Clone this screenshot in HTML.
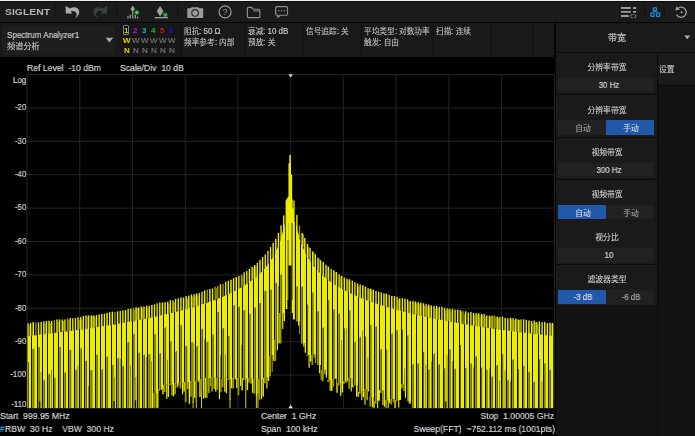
<!DOCTYPE html>
<html lang="zh"><head><meta charset="utf-8"><title>SIGLENT Spectrum Analyzer</title>
<style>
*{margin:0;padding:0;box-sizing:border-box}
html,body{width:695px;height:436px;overflow:hidden;background:#000}
body{position:relative;font-family:"Liberation Sans","Noto Sans CJK SC",sans-serif;color:#cfcfcf;font-size:8px;line-height:12px}
.t{position:absolute;white-space:pre;line-height:12px;height:12px;will-change:transform;-webkit-text-stroke:0.22px}
.c{-webkit-text-stroke:0.1px}
.box{position:absolute}
svg{position:absolute;left:0;top:0;overflow:visible}
</style></head>
<body>
<div class="box" style="left:0px;top:0px;width:695px;height:1px;background:#f0f0f0;"></div>
<div class="box" style="left:0px;top:1px;width:695px;height:1.4px;background:#0a0a0a;"></div>
<div class="box" style="left:0px;top:2.2px;width:695px;height:20px;background:#1b1b1b;"></div>
<div class="box" style="left:0px;top:21.9px;width:695px;height:1.2px;background:#050505;"></div>
<div class="box" style="left:0px;top:23px;width:556px;height:34px;background:#191919;"></div>
<div class="box" style="left:2px;top:25.6px;width:113.3px;height:29px;background:#1e1e1e;border-radius:4px;"></div>
<div class="t" style="top:28.8px;font-size:8.3px;left:6.5px;transform:scaleX(0.973);transform-origin:left center;color:#c6c6c6;">Spectrum Analyzer1</div>
<div class="t" style="top:40.8px;font-size:8.2px;left:6.5px;color:#c6c6c6;"><span class="c">频谱分析</span></div>
<svg width="695" height="436"><polygon points="105.6,37.8 113.2,37.8 109.4,42.4" fill="#a8a8a8"/></svg>
<div class="box" style="left:120.5px;top:23px;width:60px;height:34px;background:#171717;"></div>
<div class="t" style="top:24.9px;font-size:8px;left:124px;color:#e4d400;font-weight:bold;-webkit-text-stroke:0;">1</div>
<div class="t" style="top:35px;font-size:8px;left:123.3px;color:#e4d400;font-weight:bold;-webkit-text-stroke:0;">W</div>
<div class="t" style="top:44.9px;font-size:8px;left:123.6px;color:#e4d400;font-weight:bold;-webkit-text-stroke:0;">N</div>
<div class="t" style="top:24.9px;font-size:8px;left:133px;color:#cc18cc;font-weight:bold;-webkit-text-stroke:0;">2</div>
<div class="t" style="top:35px;font-size:8px;left:132.4px;color:#737373;">W</div>
<div class="t" style="top:44.9px;font-size:8px;left:132.7px;color:#737373;">N</div>
<div class="t" style="top:24.9px;font-size:8px;left:142px;color:#10b8b8;font-weight:bold;-webkit-text-stroke:0;">3</div>
<div class="t" style="top:35px;font-size:8px;left:141.4px;color:#737373;">W</div>
<div class="t" style="top:44.9px;font-size:8px;left:141.7px;color:#737373;">N</div>
<div class="t" style="top:24.9px;font-size:8px;left:150.9px;color:#10c810;font-weight:bold;-webkit-text-stroke:0;">4</div>
<div class="t" style="top:35px;font-size:8px;left:150.3px;color:#737373;">W</div>
<div class="t" style="top:44.9px;font-size:8px;left:150.6px;color:#737373;">N</div>
<div class="t" style="top:24.9px;font-size:8px;left:159.9px;color:#d81414;font-weight:bold;-webkit-text-stroke:0;">5</div>
<div class="t" style="top:35px;font-size:8px;left:159.3px;color:#737373;">W</div>
<div class="t" style="top:44.9px;font-size:8px;left:159.6px;color:#737373;">N</div>
<div class="t" style="top:24.9px;font-size:8px;left:169px;color:#1414d8;font-weight:bold;-webkit-text-stroke:0;">6</div>
<div class="t" style="top:35px;font-size:8px;left:168.4px;color:#737373;">W</div>
<div class="t" style="top:44.9px;font-size:8px;left:168.7px;color:#737373;">N</div>
<div class="box" style="left:122.8px;top:24.8px;width:6.4px;height:10.6px;background:#000;border:1px solid #7d838b;border-radius:1px;"></div>
<div class="t" style="top:24.9px;font-size:8px;left:124px;color:#e4d400;font-weight:bold;-webkit-text-stroke:0;">1</div>
<div class="box" style="left:180.5px;top:24px;width:1px;height:33px;background:#0f0f0f;"></div>
<div class="box" style="left:244px;top:24px;width:1px;height:33px;background:#0f0f0f;"></div>
<div class="box" style="left:302.1px;top:24px;width:1px;height:33px;background:#0f0f0f;"></div>
<div class="box" style="left:360.5px;top:24px;width:1px;height:33px;background:#0f0f0f;"></div>
<div class="box" style="left:432.5px;top:24px;width:1px;height:33px;background:#0f0f0f;"></div>
<div class="box" style="left:490.8px;top:24px;width:1px;height:33px;background:#0f0f0f;"></div>
<div class="box" style="left:532.1px;top:24px;width:1px;height:33px;background:#0f0f0f;"></div>
<div class="t" style="left:184.4px;top:25.3px;color:#c2c2c2"><span class="c" style="font-size:7.65px">阻抗</span><span style="display:inline-block;font-size:8.6px;transform:scaleX(0.93);transform-origin:left center;margin-right:-1.62px">: 50 Ω</span></div>
<div class="t" style="left:184.4px;top:36.4px;color:#c2c2c2"><span class="c" style="font-size:7.65px">频率参考</span><span style="display:inline-block;font-size:8.6px;transform:scaleX(0.93);transform-origin:left center;margin-right:-0.33px">: </span><span class="c" style="font-size:7.65px">内部</span></div>
<div class="t" style="left:248px;top:25.3px;color:#c2c2c2"><span class="c" style="font-size:7.65px">衰减</span><span style="display:inline-block;font-size:8.6px;transform:scaleX(0.93);transform-origin:left center;margin-right:-1.91px">: 10 dB</span></div>
<div class="t" style="left:248px;top:36.4px;color:#c2c2c2"><span class="c" style="font-size:7.65px">预放</span><span style="display:inline-block;font-size:8.6px;transform:scaleX(0.93);transform-origin:left center;margin-right:-0.33px">: </span><span class="c" style="font-size:7.65px">关</span></div>
<div class="t" style="left:306.1px;top:25.3px;color:#c2c2c2"><span class="c" style="font-size:7.65px">信号追踪</span><span style="display:inline-block;font-size:8.6px;transform:scaleX(0.93);transform-origin:left center;margin-right:-0.33px">: </span><span class="c" style="font-size:7.65px">关</span></div>
<div class="t" style="left:364.1px;top:25.3px;color:#c2c2c2"><span class="c" style="font-size:7.65px">平均类型</span><span style="display:inline-block;font-size:8.6px;transform:scaleX(0.93);transform-origin:left center;margin-right:-0.33px">: </span><span class="c" style="font-size:7.65px">对数功率</span></div>
<div class="t" style="left:364.1px;top:36.4px;color:#c2c2c2"><span class="c" style="font-size:7.65px">触发</span><span style="display:inline-block;font-size:8.6px;transform:scaleX(0.93);transform-origin:left center;margin-right:-0.33px">: </span><span class="c" style="font-size:7.65px">自由</span></div>
<div class="t" style="left:436.2px;top:25.3px;color:#c2c2c2"><span class="c" style="font-size:7.65px">扫描</span><span style="display:inline-block;font-size:8.6px;transform:scaleX(0.93);transform-origin:left center;margin-right:-0.33px">: </span><span class="c" style="font-size:7.65px">连续</span></div>
<div class="box" style="left:554.1px;top:23px;width:2px;height:413px;background:#050505;"></div>
<div class="box" style="left:556px;top:23px;width:139px;height:413px;background:#131313;"></div>
<div class="box" style="left:556px;top:23.3px;width:139px;height:28.7px;background:#1a1a1a;"></div>
<div class="box" style="left:556px;top:52px;width:139px;height:1px;background:#0b0b0b;"></div>
<div class="t" style="top:31.8px;font-size:9px;left:587px;width:60px;text-align:center;color:#d8d8d8;"><span class="c">带宽</span></div>
<svg width="695" height="436"><polygon points="684.3,35.6 690.2,35.6 687.25,39.2" fill="#b0b0b0"/></svg>
<div class="box" style="left:657px;top:53px;width:1px;height:383px;background:#0b0b0b;"></div>
<div class="box" style="left:658px;top:53px;width:37px;height:31.8px;background:#1a1a1a;"></div>
<div class="box" style="left:658px;top:84.8px;width:37px;height:1px;background:#0b0b0b;"></div>
<div class="t" style="top:63.8px;font-size:7.8px;left:659.3px;color:#c4c4c4;"><span class="c">设置</span></div>
<div class="box" style="left:556px;top:52.8px;width:101px;height:41.5px;background:#1a1a1a;"></div>
<div class="box" style="left:556px;top:94.3px;width:101px;height:0.9px;background:#0b0b0b;"></div>
<div class="t" style="top:62.1px;font-size:7.8px;left:556.5px;width:100px;text-align:center;color:#d0d0d0;"><span class="c">分辨率带宽</span></div>
<div class="box" style="left:558.4px;top:78px;width:96px;height:14.1px;background:#212121;"></div>
<div class="t" style="top:79.3px;font-size:8.5px;left:560.7px;width:96px;text-align:center;transform:scaleX(0.93);transform-origin:center center;color:#d0d0d0;">30 Hz</div>
<div class="box" style="left:556px;top:95.2px;width:101px;height:41.5px;background:#1a1a1a;"></div>
<div class="box" style="left:556px;top:136.7px;width:101px;height:0.9px;background:#0b0b0b;"></div>
<div class="t" style="top:104.5px;font-size:7.8px;left:556.5px;width:100px;text-align:center;color:#d0d0d0;"><span class="c">分辨率带宽</span></div>
<div class="box" style="left:558.4px;top:120.4px;width:47.8px;height:14.2px;background:#212121;"></div>
<div class="box" style="left:606.2px;top:120.4px;width:48.2px;height:14.2px;background:#2258a8;"></div>
<div class="t" style="top:121.7px;font-size:8.5px;left:558.6px;width:48px;text-align:center;color:#a4a4a4;"><span class="c" style="font-size:7.8px">自动</span></div>
<div class="t" style="top:121.7px;font-size:8.5px;left:606.6px;width:48px;text-align:center;color:#dedede;"><span class="c" style="font-size:7.8px">手动</span></div>
<div class="box" style="left:556px;top:137.6px;width:101px;height:41.5px;background:#1a1a1a;"></div>
<div class="box" style="left:556px;top:179.1px;width:101px;height:0.9px;background:#0b0b0b;"></div>
<div class="t" style="top:146.9px;font-size:7.8px;left:556.5px;width:100px;text-align:center;color:#d0d0d0;"><span class="c">视频带宽</span></div>
<div class="box" style="left:558.4px;top:162.8px;width:96px;height:14.1px;background:#212121;"></div>
<div class="t" style="top:164.1px;font-size:8.5px;left:560.7px;width:96px;text-align:center;transform:scaleX(0.93);transform-origin:center center;color:#d0d0d0;">300 Hz</div>
<div class="box" style="left:556px;top:180px;width:101px;height:41.5px;background:#1a1a1a;"></div>
<div class="box" style="left:556px;top:221.5px;width:101px;height:0.9px;background:#0b0b0b;"></div>
<div class="t" style="top:189.3px;font-size:7.8px;left:556.5px;width:100px;text-align:center;color:#d0d0d0;"><span class="c">视频带宽</span></div>
<div class="box" style="left:558.4px;top:205.2px;width:47.8px;height:14.2px;background:#2258a8;"></div>
<div class="box" style="left:606.2px;top:205.2px;width:48.2px;height:14.2px;background:#212121;"></div>
<div class="t" style="top:206.5px;font-size:8.5px;left:558.6px;width:48px;text-align:center;color:#dedede;"><span class="c" style="font-size:7.8px">自动</span></div>
<div class="t" style="top:206.5px;font-size:8.5px;left:606.6px;width:48px;text-align:center;color:#a4a4a4;"><span class="c" style="font-size:7.8px">手动</span></div>
<div class="box" style="left:556px;top:222.4px;width:101px;height:41.5px;background:#1a1a1a;"></div>
<div class="box" style="left:556px;top:263.9px;width:101px;height:0.9px;background:#0b0b0b;"></div>
<div class="t" style="top:231.7px;font-size:7.8px;left:556.5px;width:100px;text-align:center;color:#d0d0d0;"><span class="c">视分比</span></div>
<div class="box" style="left:558.4px;top:247.6px;width:96px;height:14.1px;background:#212121;"></div>
<div class="t" style="top:248.9px;font-size:8.5px;left:560.7px;width:96px;text-align:center;transform:scaleX(0.93);transform-origin:center center;color:#d0d0d0;">10</div>
<div class="box" style="left:556px;top:264.8px;width:101px;height:41.5px;background:#1a1a1a;"></div>
<div class="box" style="left:556px;top:306.3px;width:101px;height:0.9px;background:#0b0b0b;"></div>
<div class="t" style="top:274.1px;font-size:7.8px;left:556.5px;width:100px;text-align:center;color:#d0d0d0;"><span class="c">滤波器类型</span></div>
<div class="box" style="left:558.4px;top:290px;width:47.8px;height:14.2px;background:#2258a8;"></div>
<div class="box" style="left:606.2px;top:290px;width:48.2px;height:14.2px;background:#212121;"></div>
<div class="t" style="top:291.3px;font-size:8.5px;left:558.6px;width:48px;text-align:center;transform:scaleX(0.93);transform-origin:center center;color:#dedede;">-3 dB</div>
<div class="t" style="top:291.3px;font-size:8.5px;left:606.6px;width:48px;text-align:center;transform:scaleX(0.93);transform-origin:center center;color:#a4a4a4;">-6 dB</div>
<div class="t" style="top:61.7px;font-size:9.3px;left:26.8px;transform:scaleX(0.93);transform-origin:left center;color:#d4d4d8;">Ref Level  -10 dBm</div>
<div class="t" style="top:61.7px;font-size:9.3px;left:120.1px;transform:scaleX(0.93);transform-origin:left center;color:#d4d4d8;">Scale/Div  10 dB</div>
<div class="t" style="top:74.4px;font-size:8.6px;right:668.6px;text-align:right;transform:scaleX(0.93);transform-origin:right center;color:#d4d4d8;">Log</div>
<div class="t" style="top:101.23px;font-size:8.6px;right:668.6px;text-align:right;transform:scaleX(0.93);transform-origin:right center;color:#d4d4d8;">-20</div>
<div class="t" style="top:134.61px;font-size:8.6px;right:668.6px;text-align:right;transform:scaleX(0.93);transform-origin:right center;color:#d4d4d8;">-30</div>
<div class="t" style="top:167.99px;font-size:8.6px;right:668.6px;text-align:right;transform:scaleX(0.93);transform-origin:right center;color:#d4d4d8;">-40</div>
<div class="t" style="top:201.37px;font-size:8.6px;right:668.6px;text-align:right;transform:scaleX(0.93);transform-origin:right center;color:#d4d4d8;">-50</div>
<div class="t" style="top:234.75px;font-size:8.6px;right:668.6px;text-align:right;transform:scaleX(0.93);transform-origin:right center;color:#d4d4d8;">-60</div>
<div class="t" style="top:268.13px;font-size:8.6px;right:668.6px;text-align:right;transform:scaleX(0.93);transform-origin:right center;color:#d4d4d8;">-70</div>
<div class="t" style="top:301.51px;font-size:8.6px;right:668.6px;text-align:right;transform:scaleX(0.93);transform-origin:right center;color:#d4d4d8;">-80</div>
<div class="t" style="top:334.89px;font-size:8.6px;right:668.6px;text-align:right;transform:scaleX(0.93);transform-origin:right center;color:#d4d4d8;">-90</div>
<div class="t" style="top:368.27px;font-size:8.6px;right:668.6px;text-align:right;transform:scaleX(0.93);transform-origin:right center;color:#d4d4d8;">-100</div>
<div class="t" style="top:397.6px;font-size:8.6px;right:668.6px;text-align:right;transform:scaleX(0.93);transform-origin:right center;color:#d4d4d8;">-110</div>
<div class="t" style="top:409.5px;font-size:9.3px;left:0.3px;transform:scaleX(0.93);transform-origin:left center;color:#d4d4d8;">Start  999.95 MHz</div>
<div class="t" style="top:422.9px;font-size:9.3px;left:5.3px;transform:scaleX(0.93);transform-origin:left center;color:#d4d4d8;">RBW  30 Hz    VBW  300 Hz</div>
<div class="t" style="top:422.9px;font-size:9.3px;left:0px;transform:scaleX(0.85);transform-origin:left center;color:#2f9ff2;">#</div>
<div class="t" style="top:409.5px;font-size:9.3px;left:260.5px;transform:scaleX(0.93);transform-origin:left center;color:#d4d4d8;">Center  1 GHz</div>
<div class="t" style="top:422.9px;font-size:9.3px;left:260.5px;transform:scaleX(0.93);transform-origin:left center;color:#d4d4d8;">Span  100 kHz</div>
<div class="t" style="top:409.5px;font-size:9.3px;right:140.9px;text-align:right;transform:scaleX(0.93);transform-origin:right center;color:#d4d4d8;">Stop  1.00005 GHz</div>
<div class="t" style="top:422.9px;font-size:9.3px;right:139.8px;text-align:right;transform:scaleX(0.93);transform-origin:right center;color:#d4d4d8;">Sweep(FFT)  ~752.112 ms (1001pts)</div>
<svg width="695" height="436">
<g stroke="#242424" stroke-width="1" fill="none">
<line x1="27.00" y1="74.60" x2="27.00" y2="408.40"/>
<line x1="27.00" y1="74.60" x2="554.30" y2="74.60"/>
<line x1="79.73" y1="74.60" x2="79.73" y2="408.40"/>
<line x1="27.00" y1="107.98" x2="554.30" y2="107.98"/>
<line x1="132.46" y1="74.60" x2="132.46" y2="408.40"/>
<line x1="27.00" y1="141.36" x2="554.30" y2="141.36"/>
<line x1="185.19" y1="74.60" x2="185.19" y2="408.40"/>
<line x1="27.00" y1="174.74" x2="554.30" y2="174.74"/>
<line x1="237.92" y1="74.60" x2="237.92" y2="408.40"/>
<line x1="27.00" y1="208.12" x2="554.30" y2="208.12"/>
<line x1="290.65" y1="74.60" x2="290.65" y2="408.40"/>
<line x1="27.00" y1="241.50" x2="554.30" y2="241.50"/>
<line x1="343.38" y1="74.60" x2="343.38" y2="408.40"/>
<line x1="27.00" y1="274.88" x2="554.30" y2="274.88"/>
<line x1="396.11" y1="74.60" x2="396.11" y2="408.40"/>
<line x1="27.00" y1="308.26" x2="554.30" y2="308.26"/>
<line x1="448.84" y1="74.60" x2="448.84" y2="408.40"/>
<line x1="27.00" y1="341.64" x2="554.30" y2="341.64"/>
<line x1="501.57" y1="74.60" x2="501.57" y2="408.40"/>
<line x1="27.00" y1="375.02" x2="554.30" y2="375.02"/>
<line x1="554.30" y1="74.60" x2="554.30" y2="408.40"/>
<line x1="27.00" y1="408.40" x2="554.30" y2="408.40"/>
</g>
<clipPath id="tc"><rect x="27.25" y="74.60" width="526.25" height="333.30"/></clipPath>
<g clip-path="url(#tc)">
<g fill="#ecec00"><polygon points="27.25,336.08 31.92,335.56 31.92,407.90 27.25,407.90"/><polygon points="31.92,335.56 37.20,334.96 37.20,407.90 31.92,407.90"/><polygon points="37.20,334.96 42.47,334.35 42.47,407.90 37.20,407.90"/><polygon points="42.47,334.35 47.74,333.73 47.74,407.90 42.47,407.90"/><polygon points="47.74,333.73 53.02,333.09 53.02,407.90 47.74,407.90"/><polygon points="53.02,333.09 58.29,332.44 58.29,407.90 53.02,407.90"/><polygon points="58.29,332.44 63.56,331.78 63.56,407.90 58.29,407.90"/><polygon points="63.56,331.78 68.83,331.09 68.83,407.90 63.56,407.90"/><polygon points="68.83,331.09 74.11,330.39 74.11,407.90 68.83,407.90"/><polygon points="74.11,330.39 79.38,329.68 79.38,407.90 74.11,407.90"/><polygon points="79.38,329.68 84.65,328.94 84.65,407.90 79.38,407.90"/><polygon points="84.65,328.94 89.93,328.19 89.93,407.90 84.65,407.90"/><polygon points="89.93,328.19 95.20,327.42 95.20,407.90 89.93,407.90"/><polygon points="95.20,327.42 100.47,326.62 100.47,407.90 95.20,407.90"/><polygon points="100.47,326.62 105.75,325.81 105.75,407.90 100.47,407.90"/><polygon points="105.75,325.81 111.02,324.97 111.02,407.90 105.75,407.90"/><polygon points="111.02,324.97 116.29,324.10 116.29,407.90 111.02,407.90"/><polygon points="116.29,324.10 121.56,323.21 121.56,407.90 116.29,407.90"/><polygon points="121.56,323.21 126.84,322.29 126.84,407.90 121.56,407.90"/><polygon points="126.84,322.29 132.11,321.34 132.11,407.90 126.84,407.90"/><polygon points="132.11,321.34 137.38,320.35 137.38,407.90 132.11,407.90"/><polygon points="137.38,320.35 142.66,319.34 142.66,407.90 137.38,407.90"/><polygon points="142.66,319.34 147.93,318.28 147.93,407.90 142.66,407.90"/><polygon points="147.93,318.28 153.20,317.19 153.20,407.90 147.93,407.90"/><polygon points="153.20,317.19 158.48,316.05 158.48,393.02 153.20,393.02"/><rect x="155.60" y="392.72" width="1.15" height="15.18"/><rect x="157.05" y="392.72" width="1.42" height="15.18"/><polygon points="158.48,316.05 163.75,314.87 163.75,388.66 158.48,388.66"/><rect x="160.88" y="388.36" width="1.15" height="1.41"/><rect x="162.33" y="388.36" width="1.42" height="5.99"/><polygon points="163.75,314.87 169.02,313.63 169.02,384.86 163.75,384.86"/><rect x="166.15" y="384.56" width="1.15" height="14.31"/><rect x="167.60" y="384.56" width="1.42" height="12.36"/><polygon points="169.02,313.63 174.29,312.35 174.29,384.15 169.02,384.15"/><rect x="171.42" y="383.85" width="1.15" height="11.61"/><rect x="172.87" y="383.85" width="1.42" height="12.43"/><polygon points="174.29,312.35 179.57,311.00 179.57,383.45 174.29,383.45"/><rect x="176.69" y="383.15" width="1.15" height="4.47"/><polygon points="179.57,311.00 184.84,309.58 184.84,382.76 179.57,382.76"/><rect x="181.97" y="382.46" width="1.15" height="11.93"/><rect x="183.42" y="382.46" width="1.42" height="9.15"/><polygon points="184.84,309.58 190.11,308.09 190.11,382.10 184.84,382.10"/><rect x="187.24" y="381.80" width="1.15" height="7.19"/><rect x="188.69" y="381.80" width="1.42" height="22.02"/><polygon points="190.11,308.09 195.39,306.53 195.39,381.44 190.11,381.44"/><rect x="192.51" y="381.14" width="1.15" height="21.56"/><rect x="192.64" y="401.71" width="0.90" height="6.19"/><rect x="193.96" y="381.14" width="1.42" height="16.74"/><polygon points="195.39,306.53 200.66,304.87 200.66,380.57 195.39,380.57"/><rect x="195.81" y="400.40" width="0.90" height="7.50"/><rect x="197.79" y="380.27" width="1.15" height="1.58"/><rect x="199.24" y="380.27" width="1.42" height="16.64"/><polygon points="200.66,304.87 205.93,303.11 205.93,379.25 200.66,379.25"/><rect x="201.08" y="389.97" width="0.90" height="17.93"/><rect x="203.06" y="378.95" width="1.15" height="19.87"/><rect x="204.51" y="378.95" width="1.42" height="18.75"/><polygon points="205.93,303.11 211.21,301.24 211.21,377.93 205.93,377.93"/><rect x="208.33" y="377.63" width="1.15" height="15.50"/><polygon points="211.21,301.24 216.48,299.24 216.48,377.19 211.21,377.19"/><rect x="213.61" y="376.89" width="1.15" height="12.07"/><rect x="215.06" y="376.89" width="1.42" height="14.67"/><polygon points="216.48,299.24 221.75,297.09 221.75,377.85 216.48,377.85"/><rect x="218.88" y="377.55" width="1.15" height="21.62"/><polygon points="221.75,297.09 227.02,294.77 227.02,378.51 221.75,378.51"/><rect x="224.15" y="378.21" width="1.15" height="13.49"/><rect x="225.60" y="378.21" width="1.42" height="14.95"/><polygon points="227.02,294.77 232.30,292.25 232.30,378.89 227.02,378.89"/><rect x="229.42" y="378.59" width="1.15" height="21.05"/><rect x="229.55" y="398.64" width="0.90" height="9.26"/><rect x="230.87" y="378.59" width="1.42" height="9.59"/><polygon points="232.30,292.25 237.57,289.48 237.57,378.45 232.30,378.45"/><rect x="234.70" y="378.15" width="1.15" height="1.42"/><rect x="236.15" y="378.15" width="1.42" height="9.88"/><polygon points="237.57,289.48 242.84,286.43 242.84,378.01 237.57,378.01"/><rect x="239.97" y="377.71" width="1.15" height="8.19"/><rect x="241.42" y="377.71" width="1.42" height="12.72"/><polygon points="242.84,286.43 248.12,283.02 248.12,378.00 242.84,378.00"/><rect x="245.24" y="377.70" width="1.15" height="1.89"/><rect x="245.37" y="378.59" width="0.90" height="29.31"/><rect x="246.69" y="377.70" width="1.42" height="12.41"/><polygon points="248.12,283.02 253.39,279.14 253.39,378.08 248.12,378.08"/><rect x="250.52" y="377.78" width="1.15" height="6.03"/><rect x="251.97" y="377.78" width="1.42" height="15.00"/><polygon points="253.39,279.14 258.66,274.67 258.66,378.95 253.39,378.95"/><rect x="255.79" y="378.65" width="1.15" height="17.41"/><rect x="255.91" y="395.06" width="0.90" height="12.84"/><rect x="257.24" y="378.65" width="1.42" height="14.91"/><rect x="257.50" y="392.57" width="0.90" height="15.33"/><polygon points="258.66,274.67 263.94,269.39 263.94,379.00 258.66,379.00"/><rect x="261.06" y="378.70" width="1.15" height="20.39"/><rect x="262.51" y="378.70" width="1.42" height="17.97"/><polygon points="263.94,269.39 269.21,262.92 269.21,377.78 263.94,377.78"/><rect x="266.33" y="377.48" width="1.15" height="11.18"/><rect x="267.79" y="377.48" width="1.42" height="3.53"/><polygon points="269.21,262.92 274.48,254.58 274.48,355.59 269.21,355.59"/><rect x="273.06" y="355.29" width="1.42" height="5.59"/><polygon points="274.48,254.58 279.75,242.82 279.75,339.67 274.48,339.67"/><rect x="276.88" y="339.37" width="1.15" height="10.89"/><rect x="278.33" y="339.37" width="1.42" height="3.97"/><polygon points="279.75,242.82 285.03,222.72 285.03,313.34 279.75,313.34"/><rect x="282.15" y="313.04" width="1.15" height="15.96"/><rect x="283.60" y="313.04" width="1.42" height="8.09"/><polygon points="295.57,222.72 300.85,242.82 300.85,321.33 295.57,321.33"/><rect x="297.97" y="321.03" width="1.15" height="4.58"/><rect x="299.42" y="321.03" width="1.42" height="13.22"/><polygon points="300.85,242.82 306.12,254.58 306.12,343.30 300.85,343.30"/><rect x="303.25" y="343.00" width="1.15" height="3.77"/><rect x="304.70" y="343.00" width="1.42" height="9.76"/><polygon points="306.12,254.58 311.39,262.92 311.39,354.91 306.12,354.91"/><rect x="308.52" y="354.61" width="1.15" height="13.25"/><rect x="309.97" y="354.61" width="1.42" height="6.83"/><polygon points="311.39,262.92 316.67,269.39 316.67,354.64 311.39,354.64"/><rect x="315.24" y="354.34" width="1.42" height="8.52"/><polygon points="316.67,269.39 321.94,274.67 321.94,365.06 316.67,365.06"/><rect x="319.06" y="364.76" width="1.15" height="8.67"/><polygon points="321.94,274.67 327.21,279.14 327.21,369.75 321.94,369.75"/><rect x="324.34" y="369.45" width="1.15" height="4.62"/><rect x="325.79" y="369.45" width="1.42" height="8.10"/><polygon points="327.21,279.14 332.48,283.02 332.48,379.91 327.21,379.91"/><rect x="329.61" y="379.61" width="1.15" height="11.14"/><rect x="331.06" y="379.61" width="1.42" height="11.24"/><polygon points="332.48,283.02 337.76,286.43 337.76,378.84 332.48,378.84"/><rect x="336.33" y="378.54" width="1.42" height="14.27"/><polygon points="337.76,286.43 343.03,289.48 343.03,382.97 337.76,382.97"/><rect x="340.16" y="382.67" width="1.15" height="13.42"/><rect x="341.61" y="382.67" width="1.42" height="9.79"/><polygon points="343.03,289.48 348.30,292.25 348.30,381.21 343.03,381.21"/><rect x="345.43" y="380.91" width="1.15" height="1.92"/><polygon points="348.30,292.25 353.58,294.77 353.58,377.91 348.30,377.91"/><rect x="350.70" y="377.61" width="1.15" height="13.82"/><rect x="352.15" y="377.61" width="1.42" height="9.82"/><polygon points="353.58,294.77 358.85,297.09 358.85,385.24 353.58,385.24"/><rect x="355.98" y="384.94" width="1.15" height="11.74"/><rect x="357.43" y="384.94" width="1.42" height="11.85"/><polygon points="358.85,297.09 364.12,299.24 364.12,391.85 358.85,391.85"/><rect x="361.25" y="391.55" width="1.15" height="8.65"/><rect x="362.70" y="391.55" width="1.42" height="5.55"/><polygon points="364.12,299.24 369.40,301.24 369.40,389.14 364.12,389.14"/><rect x="366.52" y="388.84" width="1.15" height="11.41"/><rect x="367.97" y="388.84" width="1.42" height="2.63"/><polygon points="369.39,301.24 374.67,303.11 374.67,397.27 369.39,397.27"/><rect x="371.79" y="396.97" width="1.15" height="10.28"/><rect x="373.25" y="396.97" width="1.42" height="10.93"/><polygon points="374.67,303.11 379.94,304.87 379.94,400.71 374.67,400.71"/><rect x="377.07" y="400.41" width="1.15" height="7.49"/><polygon points="379.94,304.87 385.21,306.53 385.21,390.31 379.94,390.31"/><rect x="382.34" y="390.01" width="1.15" height="15.01"/><rect x="383.79" y="390.01" width="1.42" height="16.63"/><polygon points="385.21,306.53 390.49,308.09 390.49,400.38 385.21,400.38"/><rect x="387.61" y="400.08" width="1.15" height="7.82"/><rect x="389.06" y="400.08" width="1.42" height="3.19"/><polygon points="390.49,308.09 395.76,309.58 395.76,399.00 390.49,399.00"/><rect x="394.34" y="398.70" width="1.42" height="9.20"/><polygon points="395.76,309.58 401.03,311.00 401.03,399.91 395.76,399.91"/><rect x="398.16" y="399.61" width="1.15" height="7.90"/><polygon points="401.03,311.00 406.31,312.35 406.31,384.00 401.03,384.00"/><rect x="403.43" y="383.70" width="1.15" height="7.28"/><rect x="404.88" y="383.70" width="1.42" height="13.98"/><polygon points="406.31,312.35 411.58,313.63 411.58,400.90 406.31,400.90"/><rect x="408.71" y="400.60" width="1.15" height="3.13"/><rect x="410.16" y="400.60" width="1.42" height="2.98"/><polygon points="411.58,313.63 416.85,314.87 416.85,407.90 411.58,407.90"/><polygon points="416.85,314.87 422.12,316.05 422.12,407.90 416.85,407.90"/><polygon points="422.12,316.05 427.40,317.19 427.40,407.90 422.12,407.90"/><polygon points="427.40,317.19 432.67,318.28 432.67,407.90 427.40,407.90"/><polygon points="432.67,318.28 437.94,319.34 437.94,407.90 432.67,407.90"/><polygon points="437.94,319.34 443.22,320.35 443.22,407.90 437.94,407.90"/><polygon points="443.22,320.35 448.49,321.34 448.49,407.90 443.22,407.90"/><polygon points="448.49,321.34 453.76,322.29 453.76,407.90 448.49,407.90"/><polygon points="453.76,322.29 459.04,323.21 459.04,407.90 453.76,407.90"/><polygon points="459.04,323.21 464.31,324.10 464.31,407.90 459.04,407.90"/><polygon points="464.31,324.10 469.58,324.97 469.58,407.90 464.31,407.90"/><polygon points="469.58,324.97 474.86,325.81 474.86,407.90 469.58,407.90"/><polygon points="474.86,325.81 480.13,326.62 480.13,407.90 474.86,407.90"/><polygon points="480.13,326.62 485.40,327.42 485.40,407.90 480.13,407.90"/><polygon points="485.40,327.42 490.67,328.19 490.67,407.90 485.40,407.90"/><polygon points="490.67,328.19 495.95,328.94 495.95,407.90 490.67,407.90"/><polygon points="495.95,328.94 501.22,329.68 501.22,407.90 495.95,407.90"/><polygon points="501.22,329.68 506.49,330.39 506.49,407.90 501.22,407.90"/><polygon points="506.49,330.39 511.77,331.09 511.77,407.90 506.49,407.90"/><polygon points="511.77,331.09 517.04,331.78 517.04,407.90 511.77,407.90"/><polygon points="517.04,331.78 522.31,332.44 522.31,407.90 517.04,407.90"/><polygon points="522.31,332.44 527.59,333.09 527.59,407.90 522.31,407.90"/><polygon points="527.59,333.09 532.86,333.73 532.86,407.90 527.59,407.90"/><polygon points="532.86,333.73 538.13,334.35 538.13,407.90 532.86,407.90"/><polygon points="538.13,334.35 543.40,334.96 543.40,407.90 538.13,407.90"/><polygon points="543.40,334.96 548.68,335.56 548.68,407.90 543.40,407.90"/><polygon points="548.68,335.56 553.50,336.10 553.50,407.90 548.68,407.90"/><rect x="289.30" y="154.90" width="1.60" height="9.10"/><rect x="288.45" y="163.20" width="2.55" height="11.80"/><rect x="288.45" y="174.60" width="3.75" height="26.40"/><polygon points="288.45,196.5 286.70,199 285.60,201 285.60,223 294.60,223 294.60,201 292.20,199.5"/><rect x="285.70" y="222.00" width="2.60" height="78.00"/><rect x="285.70" y="299.00" width="1.70" height="10.00"/><rect x="288.20" y="222.00" width="3.55" height="43.50"/><rect x="291.75" y="222.00" width="3.15" height="91.00"/><rect x="292.90" y="312.00" width="2.00" height="7.50"/></g>
<g fill="#989800"><rect x="27.25" y="362.71" width="1.20" height="45.19"/><rect x="28.67" y="324.94" width="1.00" height="11.66"/><rect x="31.87" y="349.13" width="1.85" height="58.77"/><rect x="37.15" y="347.40" width="1.85" height="60.50"/><rect x="42.42" y="380.49" width="1.85" height="27.41"/><rect x="44.46" y="323.59" width="1.00" height="11.21"/><rect x="47.69" y="374.52" width="1.85" height="33.38"/><rect x="49.81" y="322.81" width="1.00" height="11.36"/><rect x="52.97" y="378.08" width="1.85" height="29.82"/><rect x="57.68" y="321.75" width="1.00" height="11.46"/><rect x="58.24" y="347.43" width="1.85" height="60.47"/><rect x="62.92" y="320.99" width="1.00" height="11.55"/><rect x="63.51" y="372.79" width="1.85" height="35.11"/><rect x="68.20" y="320.22" width="1.00" height="11.65"/><rect x="68.78" y="350.09" width="1.85" height="57.81"/><rect x="74.06" y="370.08" width="1.85" height="37.82"/><rect x="78.75" y="320.09" width="1.00" height="10.37"/><rect x="79.33" y="348.50" width="1.85" height="59.40"/><rect x="81.41" y="319.39" width="1.00" height="10.71"/><rect x="84.60" y="361.29" width="1.85" height="46.61"/><rect x="86.65" y="316.32" width="1.00" height="13.04"/><rect x="89.88" y="370.48" width="1.85" height="37.42"/><rect x="91.95" y="315.97" width="1.00" height="12.63"/><rect x="94.60" y="317.40" width="1.00" height="10.82"/><rect x="95.15" y="354.98" width="1.85" height="52.92"/><rect x="100.42" y="369.76" width="1.85" height="38.14"/><rect x="105.70" y="356.97" width="1.85" height="50.93"/><rect x="110.97" y="365.32" width="1.85" height="42.58"/><rect x="116.24" y="358.67" width="1.85" height="49.23"/><rect x="121.51" y="366.26" width="1.85" height="41.64"/><rect x="126.79" y="342.38" width="1.85" height="65.52"/><rect x="132.06" y="334.14" width="1.85" height="73.76"/><rect x="134.16" y="309.70" width="1.00" height="11.99"/><rect x="136.80" y="307.85" width="1.00" height="13.35"/><rect x="137.33" y="353.10" width="1.85" height="54.80"/><rect x="142.04" y="308.11" width="1.00" height="12.08"/><rect x="142.61" y="355.12" width="1.85" height="52.78"/><rect x="147.34" y="308.45" width="1.00" height="10.70"/><rect x="147.88" y="354.35" width="1.85" height="53.55"/><rect x="153.15" y="334.60" width="1.85" height="58.42"/><rect x="153.20" y="392.72" width="1.75" height="15.18"/><rect x="158.43" y="353.72" width="1.85" height="34.94"/><rect x="158.48" y="388.36" width="1.75" height="2.47"/><rect x="163.70" y="327.95" width="1.85" height="56.90"/><rect x="163.75" y="384.56" width="1.75" height="7.42"/><rect x="168.41" y="303.55" width="1.00" height="11.00"/><rect x="168.97" y="341.71" width="1.85" height="42.44"/><rect x="169.02" y="383.85" width="1.75" height="1.15"/><rect x="173.65" y="301.97" width="1.00" height="11.31"/><rect x="174.24" y="351.64" width="1.85" height="31.80"/><rect x="174.29" y="383.15" width="1.75" height="11.02"/><rect x="178.14" y="383.15" width="1.42" height="2.89"/><rect x="179.52" y="325.32" width="1.85" height="57.44"/><rect x="179.57" y="382.46" width="1.75" height="6.03"/><rect x="184.79" y="346.12" width="1.85" height="35.99"/><rect x="184.84" y="381.80" width="1.75" height="20.38"/><rect x="186.88" y="298.68" width="1.00" height="11.13"/><rect x="190.06" y="342.59" width="1.85" height="38.85"/><rect x="190.11" y="381.14" width="1.75" height="15.53"/><rect x="192.09" y="296.42" width="1.00" height="11.89"/><rect x="194.77" y="295.15" width="1.00" height="12.37"/><rect x="195.34" y="346.56" width="1.85" height="34.01"/><rect x="195.39" y="380.27" width="1.75" height="21.13"/><rect x="197.40" y="295.59" width="1.00" height="11.13"/><rect x="200.61" y="329.20" width="1.85" height="50.06"/><rect x="200.66" y="378.95" width="1.75" height="12.02"/><rect x="205.88" y="342.12" width="1.85" height="35.81"/><rect x="205.93" y="377.63" width="1.75" height="20.46"/><rect x="209.78" y="377.63" width="1.42" height="8.75"/><rect x="211.16" y="334.84" width="1.85" height="42.36"/><rect x="211.21" y="376.89" width="1.75" height="14.68"/><rect x="215.85" y="287.94" width="1.00" height="12.42"/><rect x="216.43" y="312.33" width="1.85" height="65.52"/><rect x="216.48" y="377.55" width="1.75" height="12.18"/><rect x="220.33" y="377.55" width="1.42" height="14.58"/><rect x="221.70" y="328.56" width="1.85" height="49.95"/><rect x="221.75" y="378.21" width="1.75" height="9.34"/><rect x="226.97" y="336.45" width="1.85" height="42.44"/><rect x="227.02" y="378.59" width="1.75" height="1.47"/><rect x="232.25" y="305.64" width="1.85" height="72.80"/><rect x="232.30" y="378.15" width="1.75" height="10.47"/><rect x="237.52" y="307.18" width="1.85" height="70.83"/><rect x="237.57" y="377.71" width="1.75" height="17.70"/><rect x="242.26" y="275.64" width="1.00" height="12.18"/><rect x="242.79" y="310.68" width="1.85" height="67.32"/><rect x="242.84" y="377.70" width="1.75" height="2.55"/><rect x="248.07" y="314.20" width="1.85" height="63.88"/><rect x="248.12" y="377.78" width="1.75" height="4.91"/><rect x="252.73" y="267.34" width="1.00" height="13.42"/><rect x="253.34" y="307.91" width="1.85" height="71.05"/><rect x="253.39" y="378.65" width="1.75" height="15.08"/><rect x="255.43" y="266.35" width="1.00" height="12.34"/><rect x="258.61" y="303.25" width="1.85" height="75.75"/><rect x="258.66" y="378.70" width="1.75" height="20.98"/><rect x="263.88" y="291.18" width="1.85" height="86.60"/><rect x="263.94" y="377.48" width="1.75" height="5.81"/><rect x="269.16" y="290.08" width="1.85" height="65.52"/><rect x="269.21" y="355.29" width="1.75" height="21.01"/><rect x="271.61" y="355.29" width="1.15" height="16.81"/><rect x="274.43" y="283.26" width="1.85" height="56.42"/><rect x="274.48" y="339.37" width="1.75" height="21.72"/><rect x="279.70" y="274.83" width="1.85" height="38.51"/><rect x="279.75" y="313.04" width="1.75" height="30.44"/><rect x="295.52" y="286.76" width="1.50" height="34.58"/><rect x="300.80" y="286.92" width="1.50" height="56.38"/><rect x="302.87" y="234.03" width="1.00" height="12.80"/><rect x="306.07" y="305.06" width="1.50" height="49.85"/><rect x="306.12" y="354.61" width="1.75" height="1.21"/><rect x="308.14" y="246.71" width="1.00" height="10.79"/><rect x="311.34" y="292.82" width="1.50" height="61.83"/><rect x="311.39" y="354.34" width="1.75" height="10.56"/><rect x="313.79" y="354.34" width="1.15" height="3.42"/><rect x="313.43" y="252.37" width="1.00" height="12.90"/><rect x="316.62" y="311.68" width="1.50" height="53.37"/><rect x="320.52" y="364.76" width="1.42" height="15.11"/><rect x="318.72" y="258.87" width="1.00" height="12.53"/><rect x="321.89" y="327.99" width="1.50" height="41.76"/><rect x="321.94" y="369.45" width="1.75" height="11.95"/><rect x="326.56" y="265.99" width="1.00" height="12.70"/><rect x="327.16" y="300.48" width="1.50" height="79.43"/><rect x="327.21" y="379.61" width="1.75" height="2.53"/><rect x="332.43" y="309.92" width="1.50" height="68.92"/><rect x="332.48" y="378.54" width="1.75" height="7.97"/><rect x="334.51" y="272.09" width="1.00" height="12.42"/><rect x="337.71" y="313.83" width="1.50" height="69.14"/><rect x="337.76" y="382.67" width="1.75" height="2.86"/><rect x="339.73" y="276.55" width="1.00" height="11.27"/><rect x="342.98" y="328.84" width="1.50" height="52.37"/><rect x="343.03" y="380.91" width="1.75" height="3.09"/><rect x="347.72" y="280.26" width="1.00" height="11.92"/><rect x="348.25" y="310.69" width="1.50" height="67.21"/><rect x="348.30" y="377.61" width="1.75" height="11.27"/><rect x="353.53" y="342.26" width="1.50" height="42.98"/><rect x="358.25" y="286.36" width="1.00" height="10.77"/><rect x="358.80" y="337.36" width="1.50" height="54.48"/><rect x="358.85" y="391.55" width="1.75" height="2.29"/><rect x="364.07" y="337.03" width="1.50" height="52.11"/><rect x="364.12" y="388.84" width="1.75" height="15.95"/><rect x="368.75" y="288.79" width="1.00" height="12.56"/><rect x="369.34" y="325.27" width="1.50" height="72.00"/><rect x="369.39" y="396.97" width="1.75" height="9.50"/><rect x="371.42" y="289.67" width="1.00" height="12.65"/><rect x="374.62" y="326.86" width="1.50" height="73.85"/><rect x="374.67" y="400.41" width="1.75" height="3.32"/><rect x="378.52" y="400.41" width="1.42" height="0.38"/><rect x="379.89" y="349.60" width="1.50" height="40.71"/><rect x="379.94" y="390.01" width="1.75" height="2.99"/><rect x="384.59" y="293.99" width="1.00" height="12.73"/><rect x="385.16" y="350.04" width="1.50" height="50.33"/><rect x="385.21" y="400.08" width="1.75" height="7.82"/><rect x="390.44" y="334.06" width="1.50" height="64.94"/><rect x="390.49" y="398.70" width="1.75" height="5.84"/><rect x="392.89" y="398.70" width="1.15" height="3.60"/><rect x="395.71" y="330.45" width="1.50" height="69.46"/><rect x="395.76" y="399.61" width="1.75" height="1.64"/><rect x="397.76" y="299.57" width="1.00" height="10.97"/><rect x="400.98" y="329.93" width="1.50" height="54.07"/><rect x="401.03" y="383.70" width="1.75" height="4.61"/><rect x="406.26" y="335.78" width="1.50" height="65.12"/><rect x="408.28" y="302.08" width="1.00" height="11.19"/><rect x="411.53" y="364.62" width="1.50" height="43.28"/><rect x="413.58" y="301.77" width="1.00" height="12.78"/><rect x="416.25" y="303.60" width="1.00" height="11.56"/><rect x="416.80" y="363.91" width="1.50" height="43.99"/><rect x="418.91" y="304.23" width="1.00" height="11.54"/><rect x="422.07" y="352.33" width="1.50" height="55.57"/><rect x="424.17" y="305.63" width="1.00" height="11.31"/><rect x="426.76" y="306.55" width="1.00" height="10.96"/><rect x="427.35" y="369.90" width="1.50" height="38.00"/><rect x="429.46" y="306.42" width="1.00" height="11.65"/><rect x="432.62" y="354.02" width="1.50" height="53.88"/><rect x="434.69" y="308.42" width="1.00" height="10.73"/><rect x="437.34" y="308.31" width="1.00" height="11.37"/><rect x="437.89" y="364.77" width="1.50" height="43.13"/><rect x="443.17" y="368.87" width="1.50" height="39.03"/><rect x="445.21" y="310.50" width="1.00" height="10.70"/><rect x="447.88" y="309.24" width="1.00" height="12.45"/><rect x="448.44" y="349.61" width="1.50" height="58.29"/><rect x="450.48" y="311.36" width="1.00" height="10.82"/><rect x="453.71" y="369.27" width="1.50" height="38.63"/><rect x="458.99" y="345.46" width="1.50" height="62.44"/><rect x="461.03" y="311.56" width="1.00" height="12.47"/><rect x="463.68" y="313.83" width="1.00" height="10.65"/><rect x="464.26" y="368.61" width="1.50" height="39.29"/><rect x="469.53" y="363.98" width="1.50" height="43.92"/><rect x="474.28" y="315.52" width="1.00" height="10.68"/><rect x="474.81" y="356.54" width="1.50" height="51.36"/><rect x="476.84" y="314.04" width="1.00" height="12.57"/><rect x="479.51" y="316.26" width="1.00" height="10.76"/><rect x="480.08" y="368.07" width="1.50" height="39.83"/><rect x="482.10" y="315.07" width="1.00" height="12.35"/><rect x="484.75" y="316.65" width="1.00" height="11.17"/><rect x="485.35" y="370.15" width="1.50" height="37.75"/><rect x="490.01" y="316.40" width="1.00" height="12.20"/><rect x="490.62" y="376.94" width="1.50" height="30.96"/><rect x="492.65" y="316.21" width="1.00" height="12.77"/><rect x="495.34" y="317.10" width="1.00" height="12.26"/><rect x="495.90" y="365.50" width="1.50" height="42.40"/><rect x="497.98" y="317.80" width="1.00" height="11.93"/><rect x="501.17" y="354.78" width="1.50" height="53.12"/><rect x="506.44" y="380.43" width="1.50" height="27.47"/><rect x="511.14" y="319.09" width="1.00" height="12.43"/><rect x="511.72" y="359.85" width="1.50" height="48.05"/><rect x="513.77" y="320.22" width="1.00" height="11.65"/><rect x="516.38" y="319.37" width="1.00" height="12.84"/><rect x="516.99" y="369.69" width="1.50" height="38.21"/><rect x="519.01" y="320.04" width="1.00" height="12.50"/><rect x="522.26" y="366.25" width="1.50" height="41.65"/><rect x="527.54" y="372.16" width="1.50" height="35.74"/><rect x="532.23" y="323.49" width="1.00" height="10.68"/><rect x="532.81" y="382.31" width="1.50" height="25.59"/><rect x="534.84" y="321.93" width="1.00" height="12.55"/><rect x="537.48" y="324.17" width="1.00" height="10.63"/><rect x="538.08" y="359.70" width="1.50" height="48.20"/><rect x="543.35" y="363.87" width="1.50" height="44.03"/><rect x="548.63" y="370.10" width="1.50" height="37.80"/><rect x="550.72" y="323.78" width="1.00" height="12.53"/><rect x="553.30" y="323.65" width="1.00" height="12.95"/></g>
<g fill="#0c0c00"><rect x="28.40" y="362.11" width="0.55" height="45.79"/><rect x="33.67" y="348.53" width="0.55" height="59.37"/><rect x="38.95" y="346.80" width="0.55" height="61.10"/><rect x="40.80" y="371.92" width="0.40" height="35.98"/><rect x="38.99" y="401.38" width="1.30" height="6.82"/><rect x="44.22" y="379.89" width="0.55" height="28.01"/><rect x="49.49" y="373.92" width="0.55" height="33.98"/><rect x="51.34" y="369.71" width="0.40" height="38.19"/><rect x="54.77" y="377.48" width="0.55" height="30.42"/><rect x="60.04" y="346.83" width="0.55" height="61.07"/><rect x="65.31" y="372.19" width="0.55" height="35.71"/><rect x="70.58" y="349.49" width="0.55" height="58.41"/><rect x="75.86" y="369.48" width="0.55" height="38.42"/><rect x="77.71" y="365.73" width="0.40" height="42.17"/><rect x="81.13" y="347.90" width="0.55" height="60.00"/><rect x="86.40" y="360.69" width="0.55" height="47.21"/><rect x="88.25" y="386.09" width="0.40" height="21.81"/><rect x="91.68" y="369.88" width="0.55" height="38.02"/><rect x="96.95" y="354.38" width="0.55" height="53.52"/><rect x="102.22" y="369.16" width="0.55" height="38.74"/><rect x="107.50" y="356.37" width="0.55" height="51.53"/><rect x="112.77" y="364.72" width="0.55" height="43.18"/><rect x="114.62" y="377.04" width="0.40" height="30.86"/><rect x="113.35" y="401.05" width="1.30" height="7.15"/><rect x="118.04" y="358.07" width="0.55" height="49.83"/><rect x="119.89" y="358.75" width="0.40" height="49.15"/><rect x="123.31" y="365.66" width="0.55" height="42.24"/><rect x="128.59" y="341.78" width="0.55" height="66.12"/><rect x="130.44" y="365.34" width="0.40" height="42.56"/><rect x="133.86" y="333.54" width="0.55" height="74.36"/><rect x="135.71" y="377.04" width="0.40" height="30.86"/><rect x="134.85" y="400.34" width="1.30" height="7.86"/><rect x="139.13" y="352.50" width="0.55" height="55.40"/><rect x="144.41" y="354.52" width="0.55" height="53.38"/><rect x="146.26" y="356.99" width="0.40" height="50.91"/><rect x="149.68" y="353.75" width="0.55" height="54.15"/><rect x="151.53" y="361.35" width="0.40" height="46.55"/><rect x="154.95" y="334.00" width="0.55" height="59.02"/><rect x="160.23" y="353.12" width="0.55" height="35.54"/><rect x="165.50" y="327.35" width="0.55" height="57.50"/><rect x="167.35" y="360.06" width="0.40" height="24.80"/><rect x="170.77" y="341.11" width="0.55" height="43.04"/><rect x="176.04" y="351.04" width="0.55" height="32.40"/><rect x="181.32" y="324.72" width="0.55" height="58.04"/><rect x="186.59" y="345.52" width="0.55" height="36.59"/><rect x="191.86" y="341.99" width="0.55" height="39.45"/><rect x="193.71" y="343.35" width="0.40" height="38.09"/><rect x="197.14" y="345.96" width="0.55" height="34.61"/><rect x="202.41" y="328.60" width="0.55" height="50.66"/><rect x="204.26" y="338.96" width="0.40" height="40.29"/><rect x="207.68" y="341.52" width="0.55" height="36.41"/><rect x="212.96" y="334.24" width="0.55" height="42.96"/><rect x="218.23" y="311.73" width="0.55" height="66.12"/><rect x="220.08" y="355.36" width="0.40" height="22.50"/><rect x="223.50" y="327.96" width="0.55" height="50.55"/><rect x="225.35" y="354.31" width="0.40" height="24.20"/><rect x="228.77" y="335.85" width="0.55" height="43.04"/><rect x="234.05" y="305.04" width="0.55" height="73.40"/><rect x="239.32" y="306.58" width="0.55" height="71.43"/><rect x="241.17" y="344.78" width="0.40" height="33.23"/><rect x="244.59" y="310.08" width="0.55" height="67.92"/><rect x="249.87" y="313.60" width="0.55" height="64.48"/><rect x="255.14" y="307.31" width="0.55" height="71.65"/><rect x="260.41" y="302.65" width="0.55" height="76.35"/><rect x="265.69" y="290.58" width="0.55" height="87.20"/><rect x="270.96" y="289.48" width="0.55" height="66.12"/><rect x="276.23" y="282.66" width="0.55" height="57.02"/><rect x="278.08" y="285.90" width="0.40" height="53.77"/><rect x="281.50" y="274.23" width="0.55" height="39.11"/><rect x="296.97" y="286.16" width="0.55" height="35.18"/><rect x="302.25" y="286.32" width="0.55" height="56.98"/><rect x="307.52" y="304.46" width="0.55" height="50.45"/><rect x="312.79" y="292.22" width="0.55" height="62.43"/><rect x="318.06" y="311.08" width="0.55" height="53.97"/><rect x="323.34" y="327.39" width="0.55" height="42.36"/><rect x="328.61" y="299.88" width="0.55" height="80.03"/><rect x="333.88" y="309.32" width="0.55" height="69.52"/><rect x="339.16" y="313.23" width="0.55" height="69.74"/><rect x="341.36" y="339.94" width="0.40" height="43.03"/><rect x="344.43" y="328.24" width="0.55" height="52.97"/><rect x="346.63" y="327.70" width="0.40" height="53.51"/><rect x="349.70" y="310.09" width="0.55" height="67.81"/><rect x="354.98" y="341.66" width="0.55" height="43.58"/><rect x="360.25" y="336.76" width="0.55" height="55.08"/><rect x="362.45" y="330.68" width="0.40" height="61.16"/><rect x="365.52" y="336.43" width="0.55" height="52.71"/><rect x="367.72" y="357.54" width="0.40" height="31.60"/><rect x="370.79" y="324.67" width="0.55" height="72.60"/><rect x="376.07" y="326.26" width="0.55" height="74.45"/><rect x="381.34" y="349.00" width="0.55" height="41.31"/><rect x="386.61" y="349.44" width="0.55" height="50.93"/><rect x="391.89" y="333.46" width="0.55" height="65.54"/><rect x="397.16" y="329.85" width="0.55" height="70.06"/><rect x="402.43" y="329.33" width="0.55" height="54.67"/><rect x="404.63" y="368.63" width="0.40" height="15.37"/><rect x="407.71" y="335.18" width="0.55" height="65.72"/><rect x="412.98" y="364.02" width="0.55" height="43.88"/><rect x="418.25" y="363.31" width="0.55" height="44.59"/><rect x="423.52" y="351.73" width="0.55" height="56.17"/><rect x="425.73" y="364.62" width="0.40" height="43.28"/><rect x="428.80" y="369.30" width="0.55" height="38.60"/><rect x="431.00" y="361.59" width="0.40" height="46.31"/><rect x="434.07" y="353.42" width="0.55" height="54.48"/><rect x="439.34" y="364.17" width="0.55" height="43.73"/><rect x="444.62" y="368.27" width="0.55" height="39.63"/><rect x="446.82" y="355.40" width="0.40" height="52.50"/><rect x="445.14" y="401.42" width="1.30" height="6.78"/><rect x="449.89" y="349.01" width="0.55" height="58.89"/><rect x="452.09" y="361.25" width="0.40" height="46.65"/><rect x="455.16" y="368.67" width="0.55" height="39.23"/><rect x="460.44" y="344.86" width="0.55" height="63.04"/><rect x="465.71" y="368.01" width="0.55" height="39.89"/><rect x="470.98" y="363.38" width="0.55" height="44.52"/><rect x="473.18" y="367.48" width="0.40" height="40.42"/><rect x="476.25" y="355.94" width="0.55" height="51.96"/><rect x="481.53" y="367.47" width="0.55" height="40.43"/><rect x="486.80" y="369.55" width="0.55" height="38.35"/><rect x="489.00" y="368.64" width="0.40" height="39.26"/><rect x="492.07" y="376.34" width="0.55" height="31.56"/><rect x="497.35" y="364.90" width="0.55" height="43.00"/><rect x="499.55" y="380.51" width="0.40" height="27.39"/><rect x="502.62" y="354.18" width="0.55" height="53.72"/><rect x="504.82" y="370.39" width="0.40" height="37.51"/><rect x="507.89" y="379.83" width="0.55" height="28.07"/><rect x="510.09" y="381.42" width="0.40" height="26.48"/><rect x="513.17" y="359.25" width="0.55" height="48.65"/><rect x="518.44" y="369.09" width="0.55" height="38.81"/><rect x="523.71" y="365.65" width="0.55" height="42.25"/><rect x="528.99" y="371.56" width="0.55" height="36.34"/><rect x="534.26" y="381.71" width="0.55" height="26.19"/><rect x="539.53" y="359.10" width="0.55" height="48.80"/><rect x="541.73" y="380.98" width="0.40" height="26.92"/><rect x="544.80" y="363.27" width="0.55" height="44.63"/><rect x="550.08" y="369.50" width="0.55" height="38.40"/><rect x="292.70" y="200.00" width="0.60" height="8.50"/><rect x="291.75" y="223.00" width="0.70" height="77.00"/><rect x="287.70" y="240.00" width="0.60" height="60.00"/></g>
<g fill="#0a0a00" shape-rendering="crispEdges"><rect x="31.42" y="335.06" width="1.00" height="72.84"/><rect x="36.70" y="334.46" width="1.00" height="73.44"/><rect x="41.97" y="333.85" width="1.00" height="74.05"/><rect x="47.24" y="333.23" width="1.00" height="74.67"/><rect x="52.52" y="332.59" width="1.00" height="75.31"/><rect x="57.79" y="331.94" width="1.00" height="75.96"/><rect x="63.06" y="331.28" width="1.00" height="76.62"/><rect x="68.33" y="330.59" width="1.00" height="77.31"/><rect x="73.61" y="329.89" width="1.00" height="78.01"/><rect x="78.88" y="329.18" width="1.00" height="78.72"/><rect x="84.15" y="328.44" width="1.00" height="79.46"/><rect x="89.43" y="327.69" width="1.00" height="80.21"/><rect x="94.70" y="326.92" width="1.00" height="80.98"/><rect x="99.97" y="326.12" width="1.00" height="81.78"/><rect x="105.25" y="325.31" width="1.00" height="82.59"/><rect x="110.52" y="324.47" width="1.00" height="83.43"/><rect x="115.79" y="323.60" width="1.00" height="84.30"/><rect x="121.06" y="322.71" width="1.00" height="85.19"/><rect x="126.34" y="321.79" width="1.00" height="86.11"/><rect x="131.61" y="320.84" width="1.00" height="87.06"/><rect x="136.88" y="319.85" width="1.00" height="88.05"/><rect x="142.16" y="318.84" width="1.00" height="89.06"/><rect x="147.43" y="317.78" width="1.00" height="90.12"/><rect x="152.70" y="316.69" width="1.00" height="76.33"/><rect x="157.98" y="315.55" width="1.00" height="73.11"/><rect x="163.25" y="314.37" width="1.00" height="70.49"/><rect x="168.52" y="313.13" width="1.00" height="71.02"/><rect x="173.79" y="311.85" width="1.00" height="71.60"/><rect x="179.07" y="310.50" width="1.00" height="72.27"/><rect x="184.34" y="309.08" width="1.00" height="73.02"/><rect x="189.61" y="307.59" width="1.00" height="73.85"/><rect x="194.89" y="306.03" width="1.00" height="74.54"/><rect x="200.16" y="304.37" width="1.00" height="74.88"/><rect x="205.43" y="302.61" width="1.00" height="75.32"/><rect x="210.71" y="300.74" width="1.00" height="76.45"/><rect x="215.98" y="298.74" width="1.00" height="79.11"/><rect x="221.25" y="296.59" width="1.00" height="81.92"/><rect x="226.52" y="294.27" width="1.00" height="84.62"/><rect x="231.80" y="291.75" width="1.00" height="86.70"/><rect x="237.07" y="288.98" width="1.00" height="89.02"/><rect x="242.34" y="285.93" width="1.00" height="92.07"/><rect x="247.62" y="282.52" width="1.00" height="95.56"/><rect x="252.89" y="278.64" width="1.00" height="100.31"/><rect x="258.16" y="274.17" width="1.00" height="104.83"/><rect x="263.44" y="268.89" width="1.00" height="108.89"/><rect x="268.71" y="262.42" width="1.00" height="93.18"/><rect x="273.98" y="254.08" width="1.00" height="85.60"/><rect x="279.25" y="242.32" width="1.00" height="71.01"/><rect x="295.07" y="222.22" width="1.00" height="99.11"/><rect x="300.35" y="242.32" width="1.00" height="100.98"/><rect x="305.62" y="254.08" width="1.00" height="100.84"/><rect x="310.89" y="262.42" width="1.00" height="92.22"/><rect x="316.17" y="268.89" width="1.00" height="96.17"/><rect x="321.44" y="274.17" width="1.00" height="95.58"/><rect x="326.71" y="278.64" width="1.00" height="101.27"/><rect x="331.98" y="282.52" width="1.00" height="96.33"/><rect x="337.26" y="285.93" width="1.00" height="97.04"/><rect x="342.53" y="288.98" width="1.00" height="92.23"/><rect x="347.80" y="291.75" width="1.00" height="86.16"/><rect x="353.08" y="294.27" width="1.00" height="90.97"/><rect x="358.35" y="296.59" width="1.00" height="95.25"/><rect x="363.62" y="298.74" width="1.00" height="90.40"/><rect x="368.89" y="300.74" width="1.00" height="96.53"/><rect x="374.17" y="302.61" width="1.00" height="98.10"/><rect x="379.44" y="304.37" width="1.00" height="85.94"/><rect x="384.71" y="306.03" width="1.00" height="94.35"/><rect x="389.99" y="307.59" width="1.00" height="91.41"/><rect x="395.26" y="309.08" width="1.00" height="90.83"/><rect x="400.53" y="310.50" width="1.00" height="73.50"/><rect x="405.81" y="311.85" width="1.00" height="89.05"/><rect x="411.08" y="313.13" width="1.00" height="94.77"/><rect x="416.35" y="314.37" width="1.00" height="93.53"/><rect x="421.62" y="315.55" width="1.00" height="92.35"/><rect x="426.90" y="316.69" width="1.00" height="91.21"/><rect x="432.17" y="317.78" width="1.00" height="90.12"/><rect x="437.44" y="318.84" width="1.00" height="89.06"/><rect x="442.72" y="319.85" width="1.00" height="88.05"/><rect x="447.99" y="320.84" width="1.00" height="87.06"/><rect x="453.26" y="321.79" width="1.00" height="86.11"/><rect x="458.54" y="322.71" width="1.00" height="85.19"/><rect x="463.81" y="323.60" width="1.00" height="84.30"/><rect x="469.08" y="324.47" width="1.00" height="83.43"/><rect x="474.36" y="325.31" width="1.00" height="82.59"/><rect x="479.63" y="326.12" width="1.00" height="81.78"/><rect x="484.90" y="326.92" width="1.00" height="80.98"/><rect x="490.17" y="327.69" width="1.00" height="80.21"/><rect x="495.45" y="328.44" width="1.00" height="79.46"/><rect x="500.72" y="329.18" width="1.00" height="78.72"/><rect x="505.99" y="329.89" width="1.00" height="78.01"/><rect x="511.27" y="330.59" width="1.00" height="77.31"/><rect x="516.54" y="331.28" width="1.00" height="76.62"/><rect x="521.81" y="331.94" width="1.00" height="75.96"/><rect x="527.09" y="332.59" width="1.00" height="75.31"/><rect x="532.36" y="333.23" width="1.00" height="74.67"/><rect x="537.63" y="333.85" width="1.00" height="74.05"/><rect x="542.90" y="334.46" width="1.00" height="73.44"/><rect x="548.18" y="335.06" width="1.00" height="72.84"/></g>
<g fill="#ecec00"><rect x="27.27" y="323.16" width="1.40" height="13.44"/><rect x="29.88" y="323.07" width="1.46" height="13.24"/><rect x="32.49" y="322.06" width="1.50" height="13.95"/><rect x="37.81" y="322.42" width="1.40" height="12.99"/><rect x="40.46" y="321.90" width="1.39" height="13.21"/><rect x="43.11" y="321.18" width="1.35" height="13.62"/><rect x="45.69" y="320.97" width="1.47" height="13.52"/><rect x="48.31" y="320.74" width="1.50" height="13.44"/><rect x="51.02" y="320.79" width="1.35" height="13.07"/><rect x="56.26" y="319.42" width="1.41" height="13.79"/><rect x="58.93" y="319.38" width="1.34" height="13.50"/><rect x="61.56" y="319.51" width="1.36" height="13.04"/><rect x="64.21" y="319.39" width="1.34" height="12.81"/><rect x="69.41" y="318.06" width="1.49" height="13.46"/><rect x="72.12" y="318.21" width="1.34" height="12.96"/><rect x="74.76" y="317.95" width="1.34" height="12.87"/><rect x="77.37" y="317.18" width="1.38" height="13.28"/><rect x="79.99" y="317.09" width="1.42" height="13.01"/><rect x="82.66" y="315.81" width="1.35" height="13.92"/><rect x="85.29" y="315.38" width="1.35" height="13.98"/><rect x="87.90" y="315.42" width="1.41" height="13.56"/><rect x="90.54" y="315.43" width="1.42" height="13.17"/><rect x="93.16" y="315.31" width="1.44" height="12.91"/><rect x="95.86" y="315.02" width="1.32" height="12.80"/><rect x="98.43" y="314.50" width="1.45" height="12.92"/><rect x="101.05" y="314.10" width="1.47" height="12.92"/><rect x="103.72" y="313.65" width="1.41" height="12.96"/><rect x="106.31" y="312.97" width="1.50" height="13.23"/><rect x="108.98" y="312.25" width="1.45" height="13.53"/><rect x="111.62" y="311.63" width="1.44" height="13.72"/><rect x="116.92" y="311.27" width="1.39" height="13.21"/><rect x="119.58" y="310.83" width="1.34" height="13.20"/><rect x="122.20" y="310.28" width="1.36" height="13.30"/><rect x="124.78" y="310.13" width="1.47" height="13.00"/><rect x="127.46" y="308.91" width="1.38" height="13.74"/><rect x="130.06" y="308.56" width="1.47" height="13.62"/><rect x="135.33" y="307.23" width="1.47" height="13.97"/><rect x="137.97" y="307.49" width="1.46" height="13.21"/><rect x="140.64" y="306.43" width="1.40" height="13.76"/><rect x="143.27" y="306.51" width="1.40" height="13.16"/><rect x="145.88" y="305.62" width="1.46" height="13.53"/><rect x="148.56" y="305.71" width="1.38" height="12.91"/><rect x="151.14" y="305.02" width="1.49" height="13.04"/><rect x="153.84" y="304.46" width="1.36" height="13.05"/><rect x="156.50" y="303.36" width="1.32" height="13.58"/><rect x="159.09" y="302.54" width="1.40" height="13.82"/><rect x="161.69" y="302.60" width="1.49" height="13.17"/><rect x="164.33" y="302.18" width="1.48" height="12.99"/><rect x="167.00" y="301.71" width="1.40" height="12.84"/><rect x="169.64" y="300.00" width="1.41" height="13.92"/><rect x="172.30" y="300.38" width="1.35" height="12.89"/><rect x="174.94" y="298.85" width="1.35" height="13.77"/><rect x="177.54" y="298.37" width="1.42" height="13.57"/><rect x="180.17" y="297.49" width="1.43" height="13.75"/><rect x="182.81" y="297.56" width="1.42" height="12.98"/><rect x="185.44" y="296.10" width="1.45" height="13.71"/><rect x="188.07" y="295.58" width="1.46" height="13.49"/><rect x="190.77" y="294.54" width="1.31" height="13.77"/><rect x="193.36" y="294.14" width="1.41" height="13.38"/><rect x="196.01" y="293.34" width="1.39" height="13.38"/><rect x="198.67" y="292.91" width="1.34" height="12.99"/><rect x="201.28" y="291.74" width="1.40" height="13.30"/><rect x="203.87" y="290.42" width="1.48" height="13.74"/><rect x="209.17" y="288.98" width="1.42" height="13.34"/><rect x="211.87" y="288.39" width="1.30" height="12.96"/><rect x="219.74" y="284.21" width="1.39" height="14.03"/><rect x="225.04" y="281.74" width="1.33" height="14.23"/><rect x="227.64" y="280.74" width="1.40" height="14.02"/><rect x="230.23" y="279.72" width="1.50" height="13.78"/><rect x="232.91" y="278.13" width="1.42" height="14.06"/><rect x="235.50" y="277.04" width="1.50" height="13.76"/><rect x="238.22" y="275.83" width="1.34" height="13.52"/><rect x="243.49" y="272.30" width="1.34" height="13.91"/><rect x="246.14" y="271.00" width="1.31" height="13.51"/><rect x="248.71" y="268.81" width="1.45" height="13.89"/><rect x="251.41" y="266.63" width="1.32" height="14.13"/><rect x="253.99" y="264.95" width="1.44" height="13.73"/><rect x="256.66" y="262.70" width="1.37" height="13.76"/><rect x="259.29" y="259.76" width="1.38" height="14.28"/><rect x="261.93" y="257.01" width="1.37" height="14.39"/><rect x="264.59" y="254.45" width="1.34" height="14.05"/><rect x="267.24" y="250.86" width="1.30" height="14.41"/><rect x="269.87" y="246.97" width="1.32" height="14.68"/><rect x="272.45" y="242.79" width="1.43" height="14.71"/><rect x="275.08" y="238.98" width="1.43" height="13.68"/><rect x="277.71" y="232.83" width="1.44" height="14.00"/><rect x="280.37" y="225.42" width="1.40" height="14.13"/><rect x="283.02" y="215.37" width="1.38" height="14.42"/><rect x="296.21" y="214.94" width="1.36" height="14.86"/><rect x="301.45" y="232.83" width="1.42" height="14.01"/><rect x="304.07" y="238.02" width="1.45" height="14.63"/><rect x="306.74" y="243.84" width="1.40" height="13.66"/><rect x="309.39" y="247.83" width="1.38" height="13.82"/><rect x="311.99" y="251.48" width="1.44" height="13.79"/><rect x="314.67" y="254.17" width="1.35" height="14.34"/><rect x="317.25" y="257.70" width="1.47" height="13.71"/><rect x="319.96" y="260.24" width="1.32" height="13.80"/><rect x="322.52" y="261.93" width="1.47" height="14.52"/><rect x="325.23" y="264.72" width="1.33" height="13.97"/><rect x="327.83" y="266.66" width="1.39" height="14.10"/><rect x="330.51" y="268.93" width="1.30" height="13.76"/><rect x="333.09" y="270.24" width="1.42" height="14.27"/><rect x="335.76" y="272.08" width="1.37" height="14.13"/><rect x="338.42" y="274.36" width="1.32" height="13.47"/><rect x="341.04" y="275.77" width="1.34" height="13.58"/><rect x="343.66" y="277.51" width="1.39" height="13.29"/><rect x="346.25" y="278.73" width="1.46" height="13.45"/><rect x="348.94" y="279.18" width="1.37" height="14.32"/><rect x="351.57" y="280.58" width="1.38" height="14.18"/><rect x="354.23" y="282.29" width="1.33" height="13.68"/><rect x="356.81" y="283.50" width="1.44" height="13.63"/><rect x="359.47" y="284.45" width="1.39" height="13.79"/><rect x="362.06" y="285.29" width="1.48" height="14.03"/><rect x="364.70" y="286.53" width="1.48" height="13.82"/><rect x="367.41" y="288.21" width="1.34" height="13.14"/><rect x="370.00" y="288.67" width="1.42" height="13.65"/><rect x="372.69" y="289.74" width="1.33" height="13.52"/><rect x="375.32" y="290.92" width="1.33" height="13.24"/><rect x="377.93" y="291.59" width="1.38" height="13.45"/><rect x="380.55" y="292.41" width="1.41" height="13.48"/><rect x="383.20" y="293.35" width="1.39" height="13.37"/><rect x="385.87" y="293.61" width="1.32" height="13.92"/><rect x="388.51" y="294.79" width="1.31" height="13.52"/><rect x="391.07" y="295.87" width="1.47" height="13.20"/><rect x="393.72" y="296.08" width="1.45" height="13.73"/><rect x="396.40" y="296.83" width="1.36" height="13.71"/><rect x="399.03" y="298.23" width="1.38" height="13.02"/><rect x="401.67" y="298.19" width="1.36" height="13.75"/><rect x="404.25" y="298.85" width="1.47" height="13.77"/><rect x="406.96" y="299.33" width="1.32" height="13.94"/><rect x="409.54" y="300.96" width="1.44" height="12.96"/><rect x="412.22" y="300.82" width="1.36" height="13.73"/><rect x="414.82" y="301.45" width="1.43" height="13.72"/><rect x="417.43" y="302.13" width="1.49" height="13.64"/><rect x="420.06" y="302.47" width="1.50" height="13.89"/><rect x="422.71" y="303.24" width="1.46" height="13.70"/><rect x="425.40" y="303.80" width="1.36" height="13.70"/><rect x="427.97" y="304.53" width="1.49" height="13.54"/><rect x="430.67" y="305.39" width="1.37" height="13.23"/><rect x="433.29" y="305.97" width="1.40" height="13.18"/><rect x="435.91" y="305.88" width="1.42" height="13.80"/><rect x="438.59" y="306.78" width="1.34" height="13.41"/><rect x="441.19" y="306.75" width="1.42" height="13.96"/><rect x="443.86" y="307.73" width="1.35" height="13.47"/><rect x="446.47" y="308.38" width="1.41" height="13.32"/><rect x="449.13" y="308.81" width="1.35" height="13.37"/><rect x="451.77" y="308.86" width="1.35" height="13.79"/><rect x="454.39" y="309.61" width="1.37" height="13.51"/><rect x="457.02" y="309.63" width="1.40" height="13.95"/><rect x="459.68" y="310.08" width="1.35" height="13.95"/><rect x="464.92" y="311.22" width="1.41" height="13.70"/><rect x="467.58" y="312.47" width="1.37" height="12.88"/><rect x="470.22" y="311.85" width="1.37" height="13.93"/><rect x="472.80" y="312.91" width="1.48" height="13.29"/><rect x="475.50" y="313.03" width="1.34" height="13.58"/><rect x="478.11" y="313.28" width="1.39" height="13.74"/><rect x="480.79" y="313.88" width="1.31" height="13.54"/><rect x="483.41" y="313.84" width="1.34" height="13.98"/><rect x="486.03" y="315.34" width="1.37" height="12.88"/><rect x="488.70" y="315.69" width="1.30" height="12.91"/><rect x="491.34" y="315.60" width="1.31" height="13.38"/><rect x="496.55" y="316.60" width="1.43" height="13.13"/><rect x="499.21" y="316.95" width="1.38" height="13.14"/><rect x="501.89" y="316.51" width="1.30" height="13.95"/><rect x="504.43" y="317.79" width="1.50" height="13.03"/><rect x="507.07" y="318.32" width="1.47" height="12.85"/><rect x="509.75" y="317.63" width="1.39" height="13.89"/><rect x="512.39" y="318.06" width="1.38" height="13.81"/><rect x="515.06" y="318.49" width="1.32" height="13.71"/><rect x="517.70" y="319.38" width="1.30" height="13.16"/><rect x="520.34" y="319.36" width="1.31" height="13.51"/><rect x="522.95" y="319.23" width="1.37" height="13.97"/><rect x="525.55" y="319.85" width="1.43" height="13.69"/><rect x="528.16" y="320.55" width="1.49" height="13.31"/><rect x="530.85" y="320.92" width="1.38" height="13.26"/><rect x="533.51" y="320.53" width="1.33" height="13.95"/><rect x="536.15" y="321.97" width="1.33" height="12.83"/><rect x="538.75" y="321.40" width="1.40" height="13.71"/><rect x="541.38" y="322.16" width="1.41" height="13.25"/><rect x="544.00" y="322.09" width="1.44" height="13.62"/><rect x="546.63" y="323.17" width="1.46" height="12.84"/><rect x="549.27" y="322.65" width="1.45" height="13.66"/><rect x="551.96" y="322.99" width="1.34" height="13.61"/></g>
<g fill="#989800"><rect x="35.21" y="322.45" width="1.33" height="13.26"/><rect x="53.67" y="319.83" width="1.32" height="13.70"/><rect x="66.84" y="318.26" width="1.36" height="13.61"/><rect x="114.30" y="312.02" width="1.35" height="12.90"/><rect x="132.70" y="308.07" width="1.46" height="13.63"/><rect x="206.55" y="289.59" width="1.39" height="13.67"/><rect x="214.47" y="286.50" width="1.38" height="13.86"/><rect x="217.07" y="285.84" width="1.45" height="13.48"/><rect x="222.39" y="283.74" width="1.36" height="13.39"/><rect x="240.79" y="274.47" width="1.48" height="13.36"/><rect x="298.86" y="225.58" width="1.34" height="13.97"/><rect x="462.30" y="310.84" width="1.38" height="13.64"/><rect x="493.92" y="315.54" width="1.42" height="13.82"/></g>
</g>
<polygon points="288.35,74.2 292.95,74.2 290.65,77.6" fill="#dcdcdc"/>
<polygon points="288.35,408.2 292.95,408.2 290.65,404.8" fill="#dcdcdc"/>
</svg>
<div class="t" style="left:4.8px;top:5.7px;font-size:9.2px;font-weight:bold;color:#b4b4b4;-webkit-text-stroke:0;transform:scaleX(1.13);transform-origin:left center;letter-spacing:0px">SIGLENT</div>
<svg width="695" height="24" viewBox="0 0 695 24">
<g fill="#111111">
<rect x="54.9" y="5" width="0.9" height="13.2"/>
<rect x="116.1" y="5" width="0.9" height="13.2"/>
<rect x="177.2" y="5" width="0.9" height="13.2"/>
<rect x="644.2" y="5" width="0.9" height="13.2"/>
<rect x="663.8" y="5" width="0.9" height="13.2"/>
</g>
<!-- undo -->
<path d="M65.7 6.1 L65.7 13.6 L72.4 13.6 L70.6 11.4 C73.6 10.2 76.2 11.4 76.6 14 C76.9 15.6 76 17 74.8 18.2 C77.6 16.8 79.6 14.2 79.2 11.2 C78.6 7.6 74.4 6.2 70 8.4 Z" fill="#a9ada9"/>
<!-- redo (dim) -->
<path d="M107.1 6.1 L107.1 13.6 L100.4 13.6 L102.2 11.4 C99.2 10.2 96.6 11.4 96.2 14 C95.9 15.6 96.8 17 98 18.2 C95.2 16.8 93.2 14.2 93.6 11.2 C94.2 7.6 98.4 6.2 102.8 8.4 Z" fill="#3a403d"/>
<!-- marker peak icon -->
<g fill="#9da19d">
<polygon points="132.7,5.6 134.9,8.9 132.7,12.2 130.5,8.9"/>
<rect x="132.2" y="11.5" width="1.1" height="6.9"/>
<rect x="127.3" y="16.2" width="1.3" height="2.2"/>
<rect x="129.6" y="14.8" width="1.3" height="3.6"/>
<rect x="134.6" y="14.8" width="1.3" height="3.6"/>
<rect x="137.0" y="16.6" width="1.3" height="1.8"/>
</g>
<circle cx="136.8" cy="12.5" r="2.5" fill="#1c8426"/>
<path d="M135.3 12.5h3M136.8 11v3" stroke="#9fd6a4" stroke-width="0.7" fill="none"/>
<!-- marker delta icon -->
<polygon points="160.1,5.9 163.5,11.2 160.1,16.6 156.7,11.2" fill="#9da19d"/>
<rect x="154.9" y="17.0" width="13.2" height="1.3" fill="#9da19d"/>
<circle cx="165.3" cy="14.9" r="2.4" fill="#1c8426"/>
<path d="M164.2 14.3l1.1 1.5l1.1-1.5" stroke="#9fd6a4" stroke-width="0.7" fill="none"/>
<!-- camera -->
<path d="M187.3 9.0 a0.7 0.7 0 0 1 0.7-0.7 h2.6 l1.1-1.1 h6.6 l1.1 1.1 h3.1 a0.7 0.7 0 0 1 0.7 0.7 v8.3 a0.7 0.7 0 0 1-0.7 0.7 h-14.5 a0.7 0.7 0 0 1-0.7-0.7 Z" fill="#989c98"/>
<circle cx="195.1" cy="12.9" r="3.3" fill="none" stroke="#2a2a2a" stroke-width="1.1"/>
<!-- help -->
<circle cx="225.1" cy="11.9" r="6.0" fill="none" stroke="#9a9a9a" stroke-width="1.2"/>
<text x="225.1" y="15.3" font-family="Liberation Sans, sans-serif" font-size="9.2" fill="#9a9a9a" text-anchor="middle">?</text>
<!-- folder -->
<path d="M247.4 8.4 a1 1 0 0 1 1-1 h3.2 l1.6 1.8 h5.6 a1 1 0 0 1 1 1 v6.4 a1 1 0 0 1-1 1 h-10.4 a1 1 0 0 1-1-1 Z M253.2 11.0 h6.4" fill="none" stroke="#8e8e8e" stroke-width="1.15" stroke-linejoin="round"/>
<!-- chat -->
<path d="M276.9 6.6 h9.4 a1.2 1.2 0 0 1 1.2 1.2 v6.2 a1.2 1.2 0 0 1-1.2 1.2 h-6.0 l-2.6 2.2 l0.4-2.2 h-1.2 a1.2 1.2 0 0 1-1.2-1.2 v-6.2 a1.2 1.2 0 0 1 1.2-1.2 Z" fill="none" stroke="#909090" stroke-width="1.15" stroke-linejoin="round"/>
<g fill="#909090"><circle cx="278.9" cy="10.8" r="0.75"/><circle cx="281.7" cy="10.8" r="0.75"/><circle cx="284.5" cy="10.8" r="0.75"/></g>
<!-- list -->
<g fill="#9a9a9a">
<rect x="620.9" y="7.1" width="9.9" height="1.8" rx="0.4"/>
<rect x="620.9" y="11.0" width="9.9" height="1.8" rx="0.4"/>
<rect x="620.9" y="15.1" width="7.9" height="1.8" rx="0.4"/>
<rect x="633.0" y="7.1" width="3.2" height="1.8" rx="0.3"/>
<rect x="633.0" y="11.0" width="3.2" height="1.8" rx="0.3"/>
</g>
<rect x="630.6" y="14.7" width="5.2" height="2.9" rx="1.2" fill="none" stroke="#9a9a9a" stroke-width="0.8"/>
<rect x="632.6" y="14.2" width="1.2" height="4" fill="#1b1b1b"/>
<!-- network -->
<g fill="none" stroke="#1a8ee2" stroke-width="1.2">
<rect x="653.3" y="7.8" width="3.2" height="2.8" rx="0.5"/>
<rect x="650.9" y="13.0" width="3.2" height="3.4" rx="0.3"/>
<rect x="656.5" y="13.0" width="3.2" height="3.4" rx="0.3"/>
<path d="M654.9 10.8 v1.2 M652.5 12.6 v-0.8 h4.9 v0.8" stroke-width="0.9"/>
</g>
<!-- reset -->
<path d="M677.6 8.6 A5.1 5.1 0 1 1 676.6 14.6" fill="none" stroke="#a0a0a0" stroke-width="1.3"/>
<polygon points="675.2,10.4 676.4,6.6 680.0,9.6" fill="#a0a0a0"/>
<circle cx="681.6" cy="12.3" r="1.0" fill="#a0a0a0"/>
</svg>

</body></html>
